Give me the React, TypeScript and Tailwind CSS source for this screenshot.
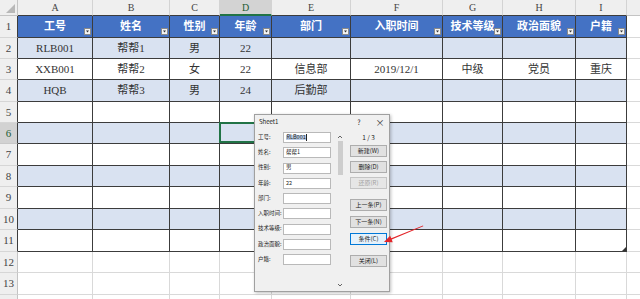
import React from 'react';

type Col = { l: string; w: string; h: string };

const COLS: Col[] = [
  { l: 'A', w: 'w-[75px]', h: '工号' },
  { l: 'B', w: 'w-[77px]', h: '姓名' },
  { l: 'C', w: 'w-[50px]', h: '性别' },
  { l: 'D', w: 'w-[52px]', h: '年龄' },
  { l: 'E', w: 'w-[79px]', h: '部门' },
  { l: 'F', w: 'w-[92px]', h: '入职时间' },
  { l: 'G', w: 'w-[60px]', h: '技术等级' },
  { l: 'H', w: 'w-[73px]', h: '政治面貌' },
  { l: 'I', w: 'w-[51px]', h: '户籍' },
];

const ROW_H = [
  'h-[22px]', 'h-[21px]', 'h-[21px]', 'h-[22px]', 'h-[21px]', 'h-[21px]', 'h-[22px]',
  'h-[21px]', 'h-[22px]', 'h-[21px]', 'h-[22px]', 'h-[21px]', 'h-[22px]', 'h-[21px]',
];

const DATA: Record<number, string[]> = {
  2: ['RLB001', '帮帮1', '男', '22', '', '', '', '', ''],
  3: ['XXB001', '帮帮2', '女', '22', '信息部', '2019/12/1', '中级', '党员', '重庆'],
  4: ['HQB', '帮帮3', '男', '24', '后勤部', '', '', '', ''],
};

function FilterBtn() {
  return (
    <div className="absolute right-[1px] bottom-[2px] w-[7px] h-[7px] bg-[#f3f3f3] border border-[#8a8a8a] flex items-center justify-center">
      <svg width="5" height="5" viewBox="0 0 5 5">
        <polygon points="1,1.5 4,1.5 2.5,3.5" fill="#333" />
      </svg>
    </div>
  );
}

function Row({ r }: { r: number }) {
  const inTable = r <= 11;
  const isHead = r === 1;
  const light = inTable && r % 2 === 0;
  const sel = r === 6;
  return (
    <div className={`flex ${ROW_H[r - 1]}`}>
      <div
        className={`w-[18px] h-full shrink-0 flex items-center justify-center text-[11px] border-b border-r ${
          sel ? 'bg-[#d2d2d2] text-[#1e5c36] border-b-[#c8c8c8]' : 'bg-[#efefef] text-[#444] border-b-[#d6d6d6]'
        } ${inTable ? 'border-r-[#3c3c3c]' : 'border-r-[#c4c4c4]'}`}
      >
        {r <= 13 ? r : ''}
      </div>
      {COLS.map((c, i) => {
        const txt = isHead ? c.h : DATA[r]?.[i] ?? '';
        const selected = sel && c.l === 'D';
        return (
          <div
            key={c.l}
            className={`${c.w} h-full shrink-0 relative flex items-center justify-center text-[11px] border-r border-b ${
              inTable ? 'border-[#3c3c3c]' : 'border-[#d9d9d9]'
            } ${isHead ? 'bg-[#4472c4] text-white font-bold' : light ? 'bg-[#d9e2f1]' : 'bg-white'}`}
          >
            {txt}
            {isHead && <FilterBtn />}
            {selected && <div className="absolute -left-[1px] -top-[1px] -right-[0px] -bottom-[0px] border-2 border-[#217346]" />}
            {r === 11 && c.l === 'I' && (
              <svg className="absolute right-[0px] bottom-[0px]" width="4" height="4" viewBox="0 0 4 4">
                <polygon points="4,0 4,4 0,4" fill="#333" />
              </svg>
            )}
          </div>
        );
      })}
      <div className="flex-1 h-full border-b border-[#d9d9d9] bg-white" />
    </div>
  );
}

function Chevron({ up }: { up?: boolean }) {
  return (
    <svg width="6" height="4" viewBox="0 0 6 4">
      <polyline
        points={up ? '1,3 3,1 5,3' : '1,1 3,3 5,1'}
        fill="none"
        stroke="#555"
        strokeWidth="0.9"
      />
    </svg>
  );
}

const LABELS: [string, string][] = [
  ['工号:', 'RLB001'],
  ['姓名:', '帮帮1'],
  ['性别:', '男'],
  ['年龄:', '22'],
  ['部门:', ''],
  ['入职时间:', ''],
  ['技术等级:', ''],
  ['政治面貌:', ''],
  ['户籍:', ''],
];

function Btn({ label, cls, variant }: { label: string; cls: string; variant?: 'disabled' | 'focus' }) {
  const v =
    variant === 'disabled'
      ? 'bg-[#e6e6e6] border-[#c4c4c4] text-[#a0a0a0]'
      : variant === 'focus'
      ? 'bg-[#e5f1fb] border-[#0078d7] text-[#222]'
      : 'bg-[#e1e1e1] border-[#adadad] text-[#222]';
  return (
    <div className={`${cls} w-[37px] h-[12px] border flex items-center justify-center text-[6px] leading-none ${v}`}>
      {label}
    </div>
  );
}

function Dialog() {
  return (
    <div className="absolute left-[254px] top-[114px] w-[136px] h-[178px] bg-[#f0f0f0] border border-[#a0a0a0] shadow-[1px_1px_3px_rgba(0,0,0,0.25)] flex flex-col font-['Noto_Sans_CJK_SC',sans-serif] text-[#222]">
      <div className="h-[14px] flex items-center pl-[4px] pr-[3px] text-[6px] leading-none">
        <span>Sheet1</span>
        <div className="ml-auto flex items-center gap-[9px]">
          <span className="w-[12px] text-center text-[7px]">?</span>
          <span className="w-[12px] text-center text-[9px] text-[#333]">×</span>
        </div>
      </div>
      <div className="flex flex-1">
        <div className="flex flex-col pl-[3px] pt-[3px] gap-[4.25px]">
          {LABELS.map(([l, v], i) => (
            <div key={l} className="flex items-center h-[11px]">
              <span className="w-[25px] text-[5.5px] leading-none whitespace-nowrap">{l}</span>
              <div className="w-[48px] h-[11px] bg-white border border-[#b9b9b9] flex items-center pl-[2px] text-[5.5px] leading-none">
                {i === 0 ? (
                  <>
                    <span className="bg-[#b9cce6] px-[0.5px]">{v}</span>
                    <span className="w-[0.5px] h-[7px] bg-[#222]" />
                  </>
                ) : (
                  v
                )}
              </div>
            </div>
          ))}
        </div>
        <div className="ml-[6px] w-[6px] flex flex-col items-center pt-[4px] pb-[2px]">
          <div className="h-[8px] flex items-center">
            <Chevron up />
          </div>
          <div className="w-[5px] h-[34px] bg-[#cdcdcd]" />
          <div className="flex-1" />
          <div className="h-[8px] flex items-center">
            <Chevron />
          </div>
        </div>
        <div className="ml-[7px] w-[37px] flex flex-col pt-[2px]">
          <div className="h-[12px] flex items-center justify-center text-[6.5px] leading-none">1 / 3</div>
          <Btn cls="mt-[2px]" label="新建(W)" />
          <Btn cls="mt-[4px]" label="删除(D)" />
          <Btn cls="mt-[4px]" label="还原(R)" variant="disabled" />
          <Btn cls="mt-[10px]" label="上一条(P)" />
          <Btn cls="mt-[5px]" label="下一条(N)" />
          <Btn cls="mt-[5px]" label="条件(C)" variant="focus" />
          <Btn cls="mt-[10px]" label="关闭(L)" />
        </div>
      </div>
    </div>
  );
}

export default function App() {
  const rows = Array.from({ length: 14 }, (_, i) => i + 1);
  return (
    <div className="relative w-[640px] h-[299px] overflow-hidden bg-white font-['Liberation_Serif','Noto_Sans_CJK_SC',serif] text-[#333]">
      <div className="flex h-[16px]">
        <div className="w-[18px] h-full shrink-0 bg-[#efefef] border-r border-b border-[#c4c4c4] relative">
          <svg className="absolute right-[2px] bottom-[2px]" width="9" height="9" viewBox="0 0 9 9">
            <polygon points="9,0 9,9 0,9" fill="#b8b8b8" />
          </svg>
        </div>
        {COLS.map((c) => (
          <div
            key={c.l}
            className={`${c.w} h-full shrink-0 flex items-center justify-center text-[10px] border-r border-r-[#d3d3d3] ${
              c.l === 'D'
                ? 'bg-[#d3d3d3] text-[#1e5c36] border-b-2 border-b-[#217346]'
                : 'bg-[#efefef] text-[#444] border-b border-b-[#3c3c3c]'
            }`}
          >
            {c.l}
          </div>
        ))}
        <div className="flex-1 h-full bg-[#efefef] border-b border-[#c4c4c4]" />
      </div>
      {rows.map((r) => (
        <Row key={r} r={r} />
      ))}
      <Dialog />
      <svg className="absolute left-0 top-0 pointer-events-none" width="640" height="299" viewBox="0 0 640 299">
        <polygon points="423,225.5 391.3,238.3 390.1,235.7 384,242 392.7,242.2 391.7,239.4 423.3,226.3" fill="#e3262a" />
      </svg>
    </div>
  );
}
